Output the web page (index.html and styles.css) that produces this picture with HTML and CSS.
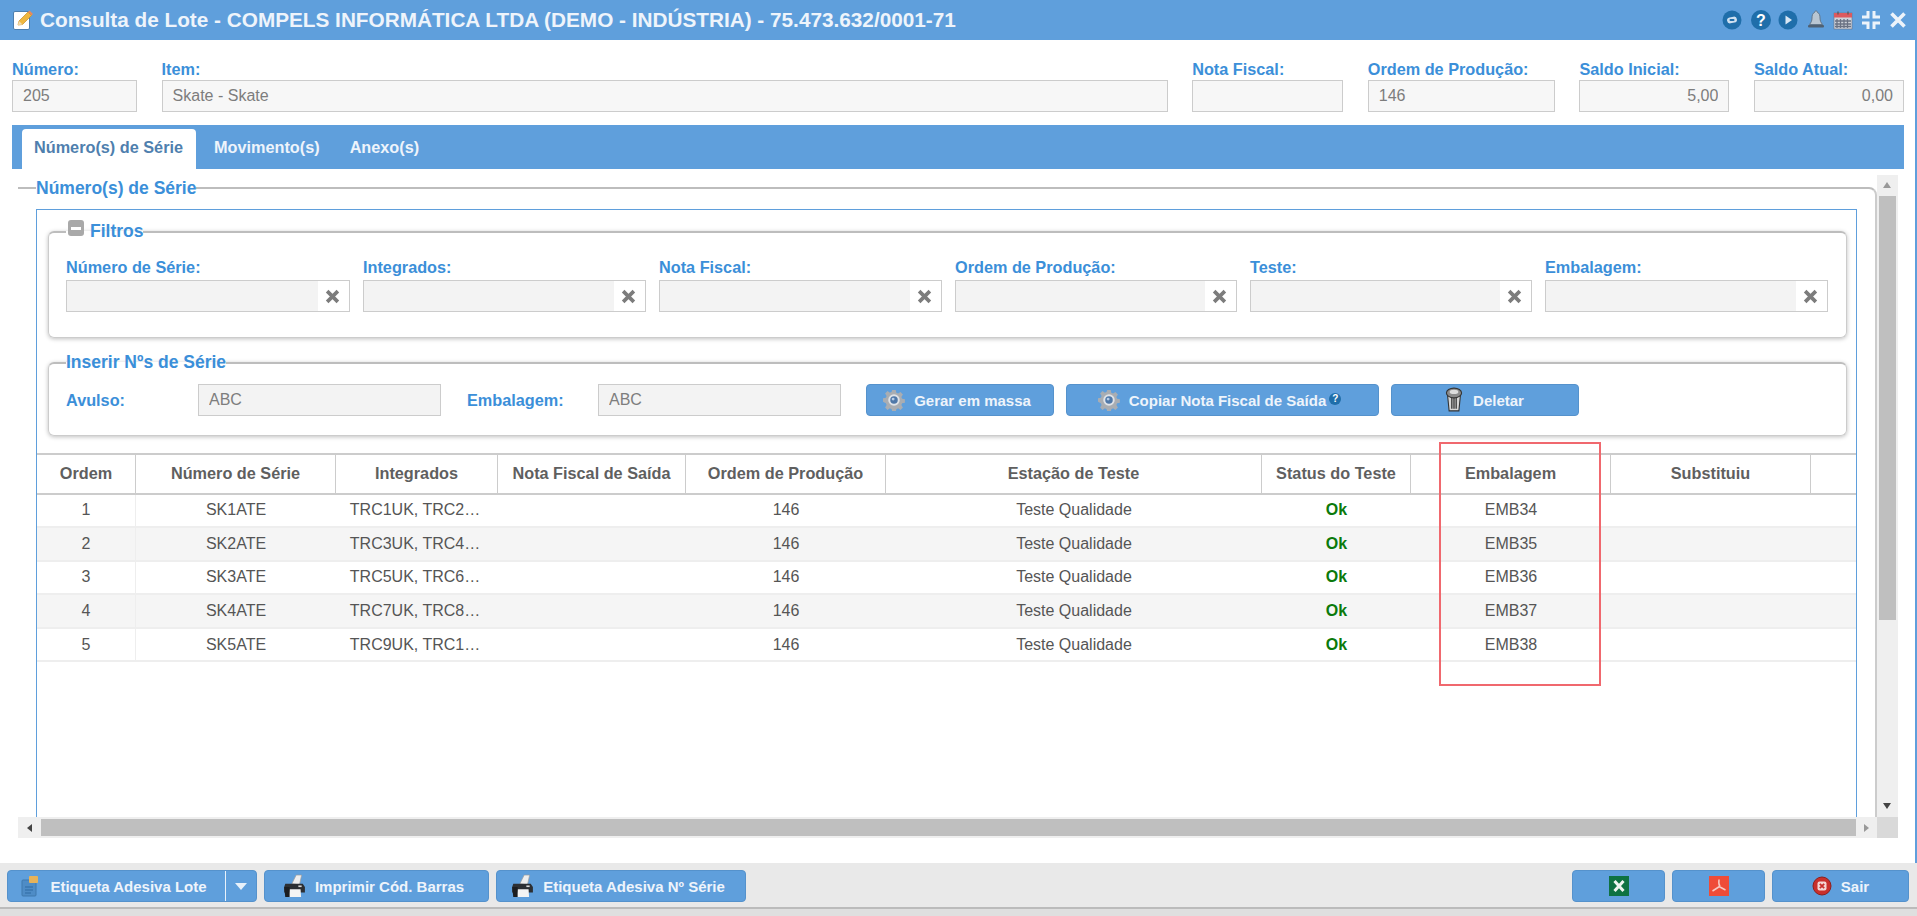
FILE: index.html
```html
<!DOCTYPE html>
<html lang="pt-BR">
<head>
<meta charset="utf-8">
<title>Consulta de Lote</title>
<link rel="stylesheet" href="styles.css">
</head>
<body>
<svg class="defs" width="0" height="0" aria-hidden="true">
  <symbol id="gear" viewBox="0 0 20 20">
    <path fill="#a9adb2" d="M8.4 1h3.2l.5 2.5 1.6.7 2.2-1.4 2.2 2.2-1.4 2.2.7 1.6 2.5.5v3.2l-2.5.5-.7 1.6 1.4 2.2-2.2 2.2-2.2-1.4-1.6.7-.5 2.5H8.4l-.5-2.5-1.6-.7-2.2 1.4-2.2-2.2 1.4-2.2-.7-1.6L0 11.6V8.4l2.6-.5.7-1.6L1.900 4.100 4.100 1.900l2.200 1.400 1.600-.7z"/>
    <circle cx="10" cy="10" r="5.200" fill="#dfe3e8"/>
    <circle cx="10" cy="10" r="3.400" fill="#4f78a8"/>
    <circle cx="9.200" cy="9.200" r="1.300" fill="#b8cde6"/>
  </symbol>
  <symbol id="printer" viewBox="0 0 22 22">
    <path fill="#eeeeee" stroke="#9a9a9a" stroke-width=".6" d="M9 9l4-8h5l-2 9z"/>
    <path fill="#2c2f33" d="M3 9h16l2 3v5H2v-5z"/>
    <path fill="#f4f4f4" d="M7 14h10l.5 7H6z"/>
    <path fill="#1b1d20" d="M2 12h5v9H3z"/>
    <rect x="15" y="10.500" width="3" height="1.500" fill="#d9d9d9"/>
  </symbol>
</svg>

<header class="titlebar">
  <svg class="title-icon" viewBox="0 0 22 22" width="22" height="22">
    <rect x="1.500" y="2.500" width="16" height="18" rx="1.500" fill="#fff" stroke="#4d7fae"/>
    <path d="M6 16l1-4L16 3l3.500 3.500L10.500 15.500z" fill="#efb73e" stroke="#c98d22" stroke-width=".7"/>
    <path d="M16 3l1.500-1.500 3.500 3.500L19.500 6.500z" fill="#e98a5a"/>
    <path d="M6 16l1-4 3.500 3.500z" fill="#f2dcb0"/>
  </svg>
  <h1 class="title">Consulta de Lote - COMPELS INFORMÁTICA LTDA (DEMO - INDÚSTRIA) - 75.473.632/0001-71</h1>
  <div class="window-tools">
    <svg viewBox="0 0 20 20" width="20" height="20"><circle cx="10" cy="10" r="9.500" fill="#1f6eaa"/><rect x="5" y="7" width="10" height="6" rx="3" fill="#cfe0f0" transform="rotate(-10 10 10)"/><rect x="7.500" y="9" width="5" height="2" rx="1" fill="#1f6eaa"/></svg>
    <svg viewBox="0 0 20 20" width="20" height="20"><circle cx="10" cy="10" r="10" fill="#1f6eaa"/><text x="10" y="15.500" class="qmark">?</text></svg>
    <svg viewBox="0 0 20 20" width="20" height="20"><circle cx="10" cy="10" r="9.500" fill="#1f6eaa"/><path d="M7.500 5.500l6.500 4.500-6.500 4.500z" fill="#d9e7f4"/></svg>
    <svg viewBox="0 0 20 20" width="20" height="20"><path d="M10 1c1 0 1.500.7 1.500 1.500 2 .8 2.500 3 2.500 5.500 0 3 1 4.500 2.500 6.500h-13C5 12.500 6 11 6 8 6 5.500 6.500 3.300 8.500 2.500 8.500 1.700 9 1 10 1z" fill="#b9c6d2" stroke="#5f7082" stroke-width=".9"/><rect x="2" y="15" width="16" height="2.500" rx="1" fill="#4f6173"/></svg>
    <svg viewBox="0 0 20 20" width="20" height="20"><rect x="1" y="3" width="18" height="16" fill="#cfd3da" stroke="#6a7183" stroke-width=".6"/><rect x="1" y="3" width="18" height="4.500" fill="#dc5a5f"/><path d="M4 9v9M7.500 9v9M11 9v9M14.500 9v9M2 11h16M2 14h16M2 16.500h16" stroke="#6a7183" stroke-width="1.300"/><path d="M5 1.500v3M15 1.500v3" stroke="#555" stroke-width="1.200"/></svg>
    <svg viewBox="0 0 20 20" width="20" height="20"><path d="M7 1v6H1M13 1v6h6M7 19v-6H1M13 19v-6h6" fill="none" stroke="#edf3fa" stroke-width="3"/></svg>
    <svg viewBox="0 0 20 20" width="20" height="20"><path d="M3.500 3.500l13 13M16.500 3.500l-13 13" stroke="#edf3fa" stroke-width="3.600"/></svg>
  </div>
</header>

<main class="main">
  <section class="top-fields">
    <label class="field"><span class="label">Número:</span><input class="input" readonly value="205"></label>
    <label class="field"><span class="label">Item:</span><input class="input" readonly value="Skate - Skate"></label>
    <label class="field"><span class="label">Nota Fiscal:</span><input class="input" readonly></label>
    <label class="field"><span class="label">Ordem de Produção:</span><input class="input" readonly value="146"></label>
    <label class="field"><span class="label">Saldo Inicial:</span><input class="input num" readonly value="5,00"></label>
    <label class="field"><span class="label">Saldo Atual:</span><input class="input num" readonly value="0,00"></label>
  </section>

  <nav class="tabs">
    <span class="tab active">Número(s) de Série</span>
    <span class="tab">Movimento(s)</span>
    <span class="tab">Anexo(s)</span>
  </nav>

  <section class="scroller">
    <fieldset class="outer">
      <legend class="outer-legend">Número(s) de Série</legend>
      <div class="blue-box">
        <fieldset class="group filters">
          <legend class="group-legend"><span class="minus"></span>Filtros</legend>
          <div class="filter-grid">
            <label class="field"><span class="label">Número de Série:</span><span class="clearable"><input class="input" readonly><svg class="clear" viewBox="0 0 14 14" width="15" height="15"><path d="M2 2l10 10M12 2L2 12" stroke="#7c7c7c" stroke-width="3.400"/></svg></span></label>
            <label class="field"><span class="label">Integrados:</span><span class="clearable"><input class="input" readonly><svg class="clear" viewBox="0 0 14 14" width="15" height="15"><path d="M2 2l10 10M12 2L2 12" stroke="#7c7c7c" stroke-width="3.400"/></svg></span></label>
            <label class="field"><span class="label">Nota Fiscal:</span><span class="clearable"><input class="input" readonly><svg class="clear" viewBox="0 0 14 14" width="15" height="15"><path d="M2 2l10 10M12 2L2 12" stroke="#7c7c7c" stroke-width="3.400"/></svg></span></label>
            <label class="field"><span class="label">Ordem de Produção:</span><span class="clearable"><input class="input" readonly><svg class="clear" viewBox="0 0 14 14" width="15" height="15"><path d="M2 2l10 10M12 2L2 12" stroke="#7c7c7c" stroke-width="3.400"/></svg></span></label>
            <label class="field"><span class="label">Teste:</span><span class="clearable"><input class="input" readonly><svg class="clear" viewBox="0 0 14 14" width="15" height="15"><path d="M2 2l10 10M12 2L2 12" stroke="#7c7c7c" stroke-width="3.400"/></svg></span></label>
            <label class="field"><span class="label">Embalagem:</span><span class="clearable"><input class="input" readonly><svg class="clear" viewBox="0 0 14 14" width="15" height="15"><path d="M2 2l10 10M12 2L2 12" stroke="#7c7c7c" stroke-width="3.400"/></svg></span></label>
          </div>
        </fieldset>

        <fieldset class="group insert">
          <legend class="group-legend">Inserir Nºs de Série</legend>
          <div class="insert-row">
            <span class="label inline w132">Avulso:</span>
            <input class="input light w243" readonly value="ABC">
            <span class="label inline w131">Embalagem:</span>
            <input class="input light w243" readonly value="ABC">
            <button class="btn shifted w188 ml25"><svg class="ico" width="22" height="22"><use href="#gear"/></svg>Gerar em massa</button>
            <button class="btn shifted w313"><svg class="ico" width="22" height="22"><use href="#gear"/></svg>Copiar Nota Fiscal de Saída<span class="hint">?</span></button>
            <button class="btn w188 trash"><svg class="ico" viewBox="0 0 18 24" width="20" height="26"><path d="M3 7h12l-1.500 15h-9z" fill="#d5d5d5" stroke="#333" stroke-width="1"/><path d="M7 10v10M9 10v10M11 10v10" stroke="#333" stroke-width="1.200"/><ellipse cx="9" cy="5.500" rx="7" ry="4.500" fill="#8b8b8b" stroke="#333"/><ellipse cx="9" cy="4.500" rx="4" ry="2" fill="#dcdcdc"/></svg>Deletar</button>
          </div>
        </fieldset>

        <div class="table-wrap">
          <table class="grid">
            <colgroup>
              <col class="c1"><col class="c2"><col class="c3"><col class="c4"><col class="c5"><col class="c6"><col class="c7"><col class="c8"><col class="c9"><col>
            </colgroup>
            <thead>
              <tr><th>Ordem</th><th>Número de Série</th><th>Integrados</th><th>Nota Fiscal de Saída</th><th>Ordem de Produção</th><th>Estação de Teste</th><th>Status do Teste</th><th>Embalagem</th><th>Substituiu</th><th class="last"></th></tr>
            </thead>
            <tbody>
              <tr><td>1</td><td>SK1ATE</td><td class="trunc">TRC1UK, TRC2…</td><td></td><td>146</td><td>Teste Qualidade</td><td class="ok">Ok</td><td>EMB34</td><td></td><td></td></tr>
              <tr><td>2</td><td>SK2ATE</td><td class="trunc">TRC3UK, TRC4…</td><td></td><td>146</td><td>Teste Qualidade</td><td class="ok">Ok</td><td>EMB35</td><td></td><td></td></tr>
              <tr><td>3</td><td>SK3ATE</td><td class="trunc">TRC5UK, TRC6…</td><td></td><td>146</td><td>Teste Qualidade</td><td class="ok">Ok</td><td>EMB36</td><td></td><td></td></tr>
              <tr><td>4</td><td>SK4ATE</td><td class="trunc">TRC7UK, TRC8…</td><td></td><td>146</td><td>Teste Qualidade</td><td class="ok">Ok</td><td>EMB37</td><td></td><td></td></tr>
              <tr><td>5</td><td>SK5ATE</td><td class="trunc">TRC9UK, TRC1…</td><td></td><td>146</td><td>Teste Qualidade</td><td class="ok">Ok</td><td>EMB38</td><td></td><td></td></tr>
            </tbody>
          </table>
          <div class="highlight"></div>
        </div>
      </div>
    </fieldset>

    <div class="vbar">
      <span class="arrow up"></span>
      <span class="vthumb"></span>
      <span class="arrow down"></span>
    </div>
    <div class="hbar">
      <span class="harrow"><i class="tri left"></i></span>
      <span class="hthumb"></span>
      <span class="harrow"><i class="tri right"></i></span>
    </div>
    <div class="corner"></div>
  </section>
</main>

<footer class="footer">
  <div class="bar-left">
    <button class="btn split w250">
      <span class="split-main"><svg class="ico" viewBox="0 0 20 22" width="20" height="22"><rect x="1" y="5" width="14" height="16" rx="1" fill="#4e8cc6" stroke="#3f78ad"/><path d="M4 12h8M4 15h8M4 18h6" stroke="#2f6aa3"/><rect x="8" y="1" width="9" height="7" rx="1" fill="#e7b35a"/></svg>Etiqueta Adesiva Lote</span>
      <span class="split-caret"><i class="tri caret"></i></span>
    </button>
    <button class="btn foot w225"><svg class="ico" width="24" height="24"><use href="#printer"/></svg>Imprimir Cód. Barras</button>
    <button class="btn foot w250"><svg class="ico" width="24" height="24"><use href="#printer"/></svg>Etiqueta Adesiva Nº Série</button>
  </div>
  <div class="bar-right">
    <button class="btn w93"><svg viewBox="0 0 20 20" width="20" height="20"><rect width="20" height="20" fill="#0e7242"/><path d="M5.500 5l9 10M14.500 5l-9 10" stroke="#eef6f0" stroke-width="3"/></svg></button>
    <button class="btn w93"><svg viewBox="0 0 20 20" width="20" height="20"><rect width="20" height="20" fill="#ef4c38"/><path d="M10 3.500c-.6 4 .6 6.500 1 7M10.500 10.500L3.500 15M10 10.500l6.500 3.500" fill="none" stroke="#f8c9c2" stroke-width="1.500"/></svg></button>
    <button class="btn w137"><svg class="ico" viewBox="0 0 20 20" width="20" height="20"><circle cx="10" cy="10" r="9" fill="#c9302c" stroke="#8f1f1c"/><rect x="5.500" y="5.500" width="9" height="9" rx="2" fill="#f5d6d4"/><path d="M7.800 7.800l4.400 4.400M12.200 7.800l-4.400 4.400" stroke="#c9302c" stroke-width="1.800"/></svg>Sair</button>
  </div>
</footer>
</body>
</html>
```
FILE: styles.css
```css
* { box-sizing: border-box; }
html, body { margin: 0; padding: 0; }
body {
  width: 1917px;
  height: 916px;
  overflow: hidden;
  display: flex;
  flex-direction: column;
  background: #fff;
  font-family: "Liberation Sans", Arial, sans-serif;
  font-size: 16px;
  color: #555;
}
.defs { position: absolute; }

.titlebar {
  height: 40px;
  flex: none;
  display: flex;
  align-items: center;
  background: #5f9fdc;
  padding: 0 9px 0 12px;
}
.title-icon { flex: none; margin-right: 6px; }
.title {
  margin: 0;
  font-size: 20.750px;
  font-weight: 700;
  color: #eef4fb;
  white-space: nowrap;
}
.window-tools {
  margin-left: auto;
  display: flex;
  align-items: center;
  gap: 7.500px;
}
.window-tools svg { display: block; }
.window-tools svg:first-child { margin-right: 1.500px; }
.qmark { font: 700 16px "Liberation Sans", sans-serif; fill: #fff; text-anchor: middle; }

.main {
  flex: none;
  height: 823px;
  border-right: 2px solid #5f9fdc;
  display: flex;
  flex-direction: column;
}

.top-fields {
  display: grid;
  grid-template-columns: 125px 1006px 151px 187px 150px 150px;
  column-gap: 24.600px;
  padding: 18px 0 13px 12px;
}
.top-fields .label { line-height: 23px; }
.field { display: flex; flex-direction: column; min-width: 0; }
.label {
  height: 22px;
  line-height: 18px;
  font-size: 16.250px;
  font-weight: 700;
  color: #3b8fd9;
  white-space: nowrap;
}
.input {
  display: block;
  width: 100%;
  height: 32px;
  border: 1px solid #ccc;
  background: #f7f7f7;
  color: #7d7d7d;
  font: 400 16px "Liberation Sans", sans-serif;
  padding: 0 10px;
  outline: none;
}
.input.num { text-align: right; padding-right: 10px; }

.tabs {
  width: 1892px;
  height: 44px;
  margin-left: 12px;
  padding: 4px 0 0 10px;
  background: #5f9fdc;
  display: flex;
  flex: none;
}
.tab {
  padding: 0 18px 0 12px;
  height: 40px;
  line-height: 37px;
  font-weight: 700;
  font-size: 16.250px;
  color: #eef4fb;
  border-radius: 4px 4px 0 0;
}
.tab.active {
  width: 174px;
  padding: 0 0 0 12px;
  margin-right: 6px;
  background: #fff;
  color: #4f7fae;
}

.scroller {
  margin: 6px 0 0 18px;
  display: grid;
  grid-template-columns: 1859px 21px;
  grid-template-rows: 642px 21px;
}
.outer {
  margin: 0;
  min-width: 0;
  height: 642px;
  overflow: hidden;
  padding: 8px 18px 0;
  border: 0;
  border-top: 2px solid #bdbdbd;
  border-right: 2px solid #ccc;
  border-radius: 0 8px 0 0;
}
.outer-legend {
  padding: 0;
  height: 26px;
  line-height: 26px;
  font-size: 17.500px;
  font-weight: 700;
  color: #3b8fd9;
}
.blue-box {
  height: 640px;
  border: 1px solid #5f9fdc;
  border-bottom: 0;
}

.group {
  min-width: 0;
  margin: 0 9px 0 11px;
  padding: 0 17px;
  border: 1px solid #ccc;
  border-top: 2px solid #bdbdbd;
  border-radius: 6px;
  box-shadow: 0 1px 4px rgba(0, 0, 0, .25);
}
.group-legend {
  display: flex;
  align-items: center;
  padding: 0 0 2px;
  height: 24px;
  line-height: 22px;
  font-size: 17.500px;
  font-weight: 700;
  color: #3b8fd9;
}
.minus {
  display: inline-block;
  position: relative;
  width: 16px;
  height: 16px;
  margin: -6px 6px 0 2px;
  background: #a9a9a9;
  border-radius: 3px;
}
.minus::after {
  content: "";
  position: absolute;
  left: 3px;
  right: 3px;
  top: 7px;
  height: 3px;
  background: #fff;
}
.filters { margin-top: 10px; padding-top: 14px; padding-bottom: 25px; }
.filter-grid {
  display: grid;
  grid-template-columns: 284px 283px 283px 282px 282px 283px;
  column-gap: 13px;
}
.clearable {
  display: flex;
  height: 32px;
  align-items: center;
  border: 1px solid #ccc;
  background: #fff;
  padding-right: 9px;
}
.clearable .input {
  flex: 1;
  height: 30px;
  border: 0;
  background: #f3f3f3;
  min-width: 0;
  margin-right: 7px;
}
.clear { flex: none; }

.insert { margin-top: 13px; padding-top: 9px; padding-bottom: 19px; }
.insert-row { display: flex; align-items: center; }
.inline { height: auto; }
.w132 { width: 132px; flex: none; }
.w131 { width: 131px; flex: none; margin-left: 26px; }
.w243 { width: 243px; flex: none; }
.input.light { background: #f3f3f3; }

.btn {
  height: 32px;
  flex: none;
  display: inline-flex;
  align-items: center;
  justify-content: center;
  padding: 0;
  background: #5f9fdc;
  border: 1px solid #5592cc;
  border-radius: 4px;
  color: #eef4fb;
  font: 700 15px "Liberation Sans", sans-serif;
  white-space: nowrap;
}
.btn.shifted { padding-right: 6px; }
.btn.foot { padding-right: 7px; }
.btn.trash { padding-right: 2px; }
.ico { flex: none; margin-right: 9px; }
.w188 { width: 188px; }
.w313 { width: 313px; }
.w250 { width: 250px; }
.w225 { width: 225px; }
.w93 { width: 93px; }
.w137 { width: 137px; }
.ml25 { margin-left: 25px; }
.insert-row .btn + .btn { margin-left: 12px; }
.hint {
  width: 12px;
  height: 12px;
  margin: -2px 0 0 3px;
  border-radius: 50%;
  background: #1f6eaa;
  color: #fff;
  font-size: 10px;
  line-height: 12px;
  text-align: center;
}

.table-wrap { position: relative; margin-top: 17px; }
.grid {
  width: 100%;
  border-collapse: separate;
  border-spacing: 0;
  table-layout: fixed;
  font-size: 16px;
}
.c1 { width: 99px; }
.c2 { width: 200px; }
.c3 { width: 162px; }
.c4 { width: 188px; }
.c5 { width: 200px; }
.c6 { width: 376px; }
.c7 { width: 149px; }
.c8 { width: 200px; }
.c9 { width: 200px; }
.grid th {
  height: 41.500px;
  padding: 0;
  font-weight: 700;
  font-size: 16.250px;
  color: #5f5f5f;
  text-align: center;
  border-top: 2px solid #ccc;
  border-bottom: 2px solid #ccc;
  border-right: 1px solid #ccc;
  white-space: nowrap;
}
.grid th.last { border-right: 0; }
.grid td {
  height: 33.600px;
  padding: 0;
  text-align: center;
  color: #555;
  border-bottom: 2px solid #eee;
  white-space: nowrap;
}
.grid td.trunc { padding-right: 4px; }
.grid td:first-child { border-right: 1px solid #eee; }
.grid tbody tr:nth-child(even) td { background: #f5f5f5; }
.grid td.ok { color: #0b7a0b; font-weight: 700; }
.highlight {
  position: absolute;
  left: 1402px;
  top: -11px;
  width: 162px;
  height: 244px;
  border: 2px solid #f0686e;
  pointer-events: none;
}

.vbar {
  display: flex;
  flex-direction: column;
  background: #efefef;
}
.arrow { height: 21px; flex: none; position: relative; }
.arrow::after {
  content: "";
  position: absolute;
  left: 6px;
  border-left: 4.500px solid transparent;
  border-right: 4.500px solid transparent;
}
.arrow.up::after { top: 7px; border-bottom: 6px solid #999; }
.arrow.down::after { bottom: 8px; border-top: 6px solid #444; }
.vthumb {
  height: 424px;
  margin: 0 2px;
  background: #bfbfbf;
}
.arrow.down { margin-top: auto; }

.hbar {
  display: flex;
  background: #efefef;
  align-items: stretch;
}
.harrow {
  flex: none;
  width: 23px;
  display: flex;
  align-items: center;
  justify-content: center;
}
.harrow:last-child { width: 21px; }
.hthumb {
  width: 1815px;
  margin: 2px 0;
  background: #bfbfbf;
  flex: none;
}
.tri { display: block; width: 0; height: 0; }
.tri.left {
  border-top: 4.500px solid transparent;
  border-bottom: 4.500px solid transparent;
  border-right: 5px solid #444;
}
.tri.right {
  border-top: 4.500px solid transparent;
  border-bottom: 4.500px solid transparent;
  border-left: 5px solid #999;
}
.corner { background: #d9d9d9; }

.footer {
  flex: none;
  height: 53px;
  background: #e9e9e9;
  display: flex;
  justify-content: space-between;
  padding: 7px 8px 0 7px;
  border-bottom: 7px solid #dfdfdf;
  position: relative;
  box-shadow: inset 0 -2px 0 #bbb;
}
.bar-left, .bar-right { display: flex; gap: 7px; }
.split { justify-content: flex-start; }
.split-main {
  width: 217px;
  padding-right: 5px;
  display: inline-flex;
  align-items: center;
  justify-content: center;
}
.split-caret {
  flex: 1;
  height: 100%;
  display: flex;
  align-items: center;
  justify-content: center;
  border-left: 1px solid #e8f1fa;
}
.tri.caret {
  border-left: 6px solid transparent;
  border-right: 6px solid transparent;
  border-top: 7px solid #e8f1fa;
}
```
